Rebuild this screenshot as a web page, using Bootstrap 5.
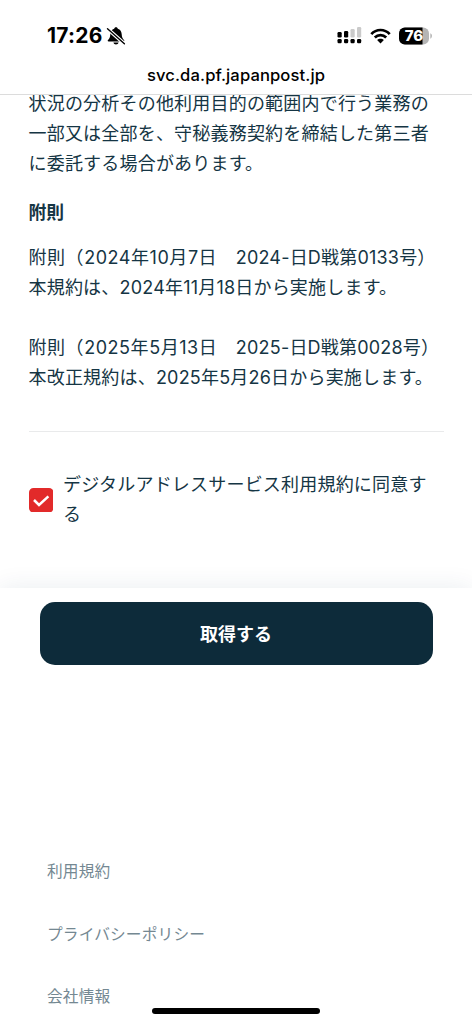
<!DOCTYPE html>
<html lang="ja">
<head>
<meta charset="utf-8">
<meta name="viewport" content="width=device-width, initial-scale=1">
<title>デジタルアドレスサービス利用規約</title>
<link href="https://cdn.jsdelivr.net/npm/bootstrap@5.3.0/dist/css/bootstrap.min.css" rel="stylesheet">
<style>
  body { font-family: Inter, "Noto Sans CJK JP", sans-serif; background: #fff; color: #153544; }
  .screen { height: 1024px; }
  .topbar { height: 95px; border-bottom: 1px solid #dcdcdc; color: #000; }
  .status { height: 59px; padding: 12px 40px 0 47px; }
  .clock { font-size: 21px; font-weight: 700; line-height: 24px; letter-spacing: .25px; }
  .bell { margin-left: 3px; }
  .address { font-size: 16.6px; font-weight: 500; line-height: 32px; letter-spacing: .1px; }
  .terms { padding: 0 28px 0 28.5px; font-size: 18px; line-height: 30px; letter-spacing: .2px; height: 493px; }
  .terms p { margin: 0; white-space: nowrap; }
  .first { margin-top: -6px !important; }
  .dated { letter-spacing: .55px; }
  .terms h2 { font-size: 17.8px; line-height: 30px; font-weight: 700; margin: 19px 0 14.5px; letter-spacing: 0; }
  .rule { height: 1px; background: #e9eaeb; margin-top: 38px; }
  .agree { margin-top: 38.5px; gap: 10px; }
  .tick { width: 24.5px; height: 24.5px; }
  .actions { height: 91px; padding: 14px 39.5px 0; background: #fff; box-shadow: 0 0 24px rgba(21,53,90,.09); clip-path: inset(-30px 0 0 0); }
  .get { height: 62.5px; border-radius: 15px; background: #0d2b3a !important; color: #fff !important; font-size: 18px; font-weight: 700; padding: 3px 0 0; border: 0; }
  .links { margin-top: 181px; padding-left: 47px; gap: 38.5px; font-size: 15.7px; line-height: 24px; letter-spacing: .15px; }
  .links a { color: #748892; text-decoration: none; }
  .home { left: 152px; bottom: 10px; width: 168px; height: 6px; background: #000; border-radius: 3px; }
</style>
</head>
<body>
<div class="screen position-relative overflow-hidden d-flex flex-column">
  <header class="topbar flex-shrink-0 bg-white position-relative z-1">
    <div class="status d-flex align-items-center justify-content-between">
      <div class="d-flex align-items-center">
        <span class="clock">17:26</span>
        <svg class="bell" width="20" height="20" viewBox="0 0 20 20"><path d="M10 1.2c1 0 1.7.7 1.8 1.5 2.5.8 3.8 2.9 3.9 5.6.1 3 1 4.400 2.300 5.700.6.7.3 1.500-.6 1.500H2.600c-.9 0-1.200-.8-.6-1.500 1.400-1.300 2.200-2.700 2.300-5.700.1-2.700 1.400-4.800 3.900-5.600.1-.8.8-1.500 1.800-1.500zM7.400 16.600h5.200c-.3 1.300-1.300 2-2.600 2s-2.300-.7-2.600-2z"/><path d="M1 2.300 19 18.300" stroke="#fff" stroke-width="3.600"/><path d="M1.500 2.700 18.400 17.700" stroke="#000" stroke-width="1.400" stroke-linecap="round"/></svg>
      </div>
      <div class="d-flex align-items-center">
        <svg width="25" height="18" viewBox="0 0 25 18"><g fill="#000"><rect x=".5" y="5" width="4.200" height="5.500" rx="1.200"/><rect x="7" y="4" width="4.200" height="6.500" rx="1.200"/><rect x=".5" y="12" width="4.200" height="4.300" rx="1.200"/><rect x="7" y="12" width="4.200" height="4.300" rx="1.200"/><rect x="13.500" y="12" width="4.200" height="4.300" rx="1.200"/><rect x="20" y="12" width="4.200" height="4.300" rx="1.200"/></g><g fill="#cacaca"><rect x="13.500" y="2" width="4.200" height="8.500" rx="1.200"/><rect x="20" y="0" width="4.200" height="10.500" rx="1.200"/></g></svg>
        <svg class="ms-2" width="21" height="16" viewBox="0 0 21 16"><g fill="none" stroke="#000" stroke-width="2.700"><path d="M1.300 6.100C6.300.6 14.700.6 19.700 6.100"/><path d="M4.800 9.500c3.200-3.300 8.200-3.300 11.400 0"/></g><path d="M10.500 15.400 7.100 12c1.900-1.800 4.900-1.800 6.800 0z"/></svg>
        <svg class="ms-2" width="33" height="18" viewBox="0 0 33 18"><defs><clipPath id="cell"><rect x="0" y=".5" width="30" height="17" rx="5.800"/></clipPath></defs><g clip-path="url(#cell)"><rect width="30" height="18" fill="#b5b5b5"/><rect width="23.500" height="18"/></g><path d="M31.300 6.300c2.200.9 2.200 4.500 0 5.400z" fill="#b5b5b5"/><text x="15" y="14.400" text-anchor="middle" font-family="Inter" font-size="15" font-weight="800" fill="#fff">76</text></svg>
      </div>
    </div>
    <div class="address text-center">svc.da.pf.japanpost.jp</div>
  </header>
  <main class="terms flex-shrink-0">
    <p class="first">状況の分析その他利用目的の範囲内で行う業務の<br>一部又は全部を、守秘義務契約を締結した第三者<br>に委託する場合があります。</p>
    <h2>附則</h2>
    <p><span class="dated">附則（2024年10月7日　</span>2024-日D戦第0133号）<br>本規約は、2024年11月18日から実施します。</p>
    <p><br><span class="dated">附則（2025年5月13日　</span>2025-日D戦第0028号）<br>本改正規約は、2025年5月26日から実施します。</p>
    <div class="rule"></div>
    <label class="agree d-flex align-items-center">
      <svg class="tick flex-shrink-0" viewBox="0 0 24.500 24.500"><rect width="24.500" height="24.500" rx="4.500" fill="#e22a2a"/><path d="m5 12 5 5 9.400-8.700" fill="none" stroke="#fff" stroke-width="2.500"/></svg>
      <span class="text-nowrap">デジタルアドレスサービス利用規約に同意す<br>る</span>
    </label>
  </main>
  <div class="actions flex-shrink-0"><button class="get btn w-100" type="button">取得する</button></div>
  <footer class="links d-flex flex-column flex-shrink-0">
    <a href="#">利用規約</a><a href="#">プライバシーポリシー</a><a href="#">会社情報</a>
  </footer>
  <div class="home position-absolute"></div>
</div>
<script src="https://cdn.jsdelivr.net/npm/bootstrap@5.3.0/dist/js/bootstrap.bundle.min.js"></script>
</body>
</html>
